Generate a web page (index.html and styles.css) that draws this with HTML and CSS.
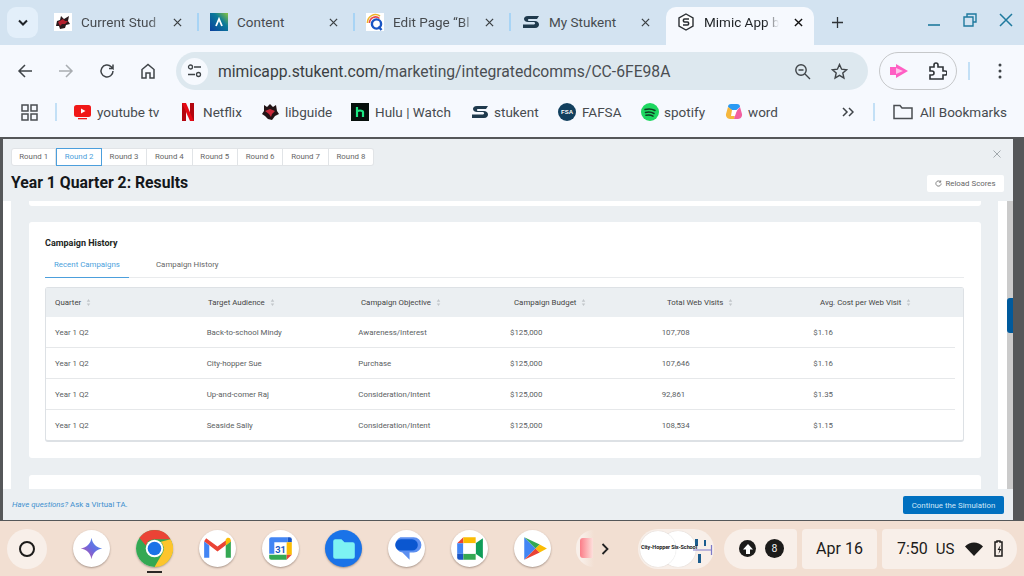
FILE: index.html
```html
<!DOCTYPE html>
<html lang="en">
<head>
<meta charset="utf-8">
<title>Mimic App</title>
<link rel="stylesheet" href="styles.css">
</head>
<body>
<div class="screen">
  <header class="browser">
    <div class="tabstrip">
      <button class="tabsearch"><svg width="12" height="8" viewBox="0 0 12 8"><path d="M2 1.5l4 4 4-4" fill="none" stroke="#1f2328" stroke-width="2"/></svg></button>
      <div class="tab">
        <svg class="fav" viewBox="0 0 18 18"><rect width="18" height="18" fill="#fff"/><path d="M3 8l3-1 1-4 3 3 5-3-1 5 2 3-4 1-1 3-5 1-1-3-3 0z" fill="#2a1a1c"/><path d="M4 9l5-3 2 2 3 0-3 3-3 0-2 2z" fill="#b3202e"/></svg>
        <span class="tabtext fade">Current Stud</span>
        <svg class="tabx" viewBox="0 0 10 10"><path d="M1 1l8 8M9 1l-8 8" stroke="#3c4043" stroke-width="1.4"/></svg>
      </div>
      <i class="tabsep"></i>
      <div class="tab">
        <svg class="fav" viewBox="0 0 18 18"><defs><linearGradient id="ag" x1="0" y1="1" x2="1" y2="0"><stop offset="0" stop-color="#0b3f9e"/><stop offset=".6" stop-color="#0a7a9a"/><stop offset="1" stop-color="#8ac43f"/></linearGradient></defs><rect width="18" height="18" fill="url(#ag)"/><path d="M6 13L9 6l3 7" fill="none" stroke="#fff" stroke-width="1.8"/></svg>
        <span class="tabtext">Content</span>
        <svg class="tabx" viewBox="0 0 10 10"><path d="M1 1l8 8M9 1l-8 8" stroke="#3c4043" stroke-width="1.4"/></svg>
      </div>
      <i class="tabsep"></i>
      <div class="tab">
        <svg class="fav" viewBox="0 0 18 18"><rect width="18" height="18" fill="#fff"/><path d="M1.5 10A8 8 0 0 1 14 3" fill="none" stroke="#f0b429" stroke-width="1.6"/><path d="M3.5 10A6 6 0 0 1 13.5 5.5" fill="none" stroke="#e5484d" stroke-width="1.6"/><circle cx="10.5" cy="11" r="4.6" fill="none" stroke="#1a56c4" stroke-width="2.4"/><path d="M12.5 13.5l3 3.5" stroke="#1a56c4" stroke-width="2.4"/></svg>
        <span class="tabtext fade">Edit Page “Bl</span>
        <svg class="tabx" viewBox="0 0 10 10"><path d="M1 1l8 8M9 1l-8 8" stroke="#3c4043" stroke-width="1.4"/></svg>
      </div>
      <i class="tabsep"></i>
      <div class="tab">
        <svg class="fav" viewBox="0 0 18 18"><path d="M17 3H6C3 3 2 4.500 2 6c0 2 2 3 4 3h6c1.500 0 1.500 2.500 0 2.500H1V15h12c3 0 4-2 4-3.500 0-2-2-3.500-4-3.500H7C5.500 8 5.500 6 7 6h8z" fill="#1f3a4d"/></svg>
        <span class="tabtext">My Stukent</span>
        <svg class="tabx" viewBox="0 0 10 10"><path d="M1 1l8 8M9 1l-8 8" stroke="#3c4043" stroke-width="1.4"/></svg>
      </div>
      <div class="tab tab-active">
        <svg class="fav" viewBox="0 0 18 18"><path d="M9 1l7 4v8l-7 4-7-4V5z" fill="#fff" stroke="#2b2f33" stroke-width="1.4"/><path d="M12 6H7.500C6 6 6 9 7.500 9h3c1.500 0 1.500 3 0 3H6" fill="none" stroke="#2b2f33" stroke-width="1.6"/></svg>
        <span class="tabtext fade">Mimic App b</span>
        <svg class="tabx" viewBox="0 0 10 10"><path d="M1 1l8 8M9 1l-8 8" stroke="#111" stroke-width="1.5"/></svg>
      </div>
      <svg class="newtab" viewBox="0 0 12 12"><path d="M6 0v12M0 6h12" stroke="#2f3337" stroke-width="1.400"/></svg>
      <div class="winctl">
        <svg width="14" height="14" viewBox="0 0 14 14"><path d="M1 12h12" stroke="#1f7a9e" stroke-width="1.600"/></svg>
        <svg width="14" height="14" viewBox="0 0 14 14"><path d="M4 4V1h9v8h-3M1 4h9v9H1z" fill="none" stroke="#1f7a9e" stroke-width="1.400"/></svg>
        <svg width="14" height="14" viewBox="0 0 14 14"><path d="M1 1l12 12M13 1L1 13" stroke="#1f7a9e" stroke-width="1.500"/></svg>
      </div>
    </div>

    <div class="toolbar">
      <div class="navs">
        <svg width="16" height="16" viewBox="0 0 16 16"><path d="M15 8H2M8 2L2 8l6 6" fill="none" stroke="#3f4448" stroke-width="1.500"/></svg>
        <svg width="16" height="16" viewBox="0 0 16 16"><path d="M1 8h13M8 2l6 6-6 6" fill="none" stroke="#a9adb1" stroke-width="1.500"/></svg>
        <svg width="16" height="16" viewBox="0 0 16 16"><path d="M14 8a6 6 0 1 1-1.800-4.300L14 5.500V1.500M14 5.500h-4" fill="none" stroke="#3f4448" stroke-width="1.500"/></svg>
        <svg width="16" height="16" viewBox="0 0 16 16"><path d="M2 15V6.500L8 1.500l6 5V15h-4v-5H6v5z" fill="none" stroke="#3f4448" stroke-width="1.500"/></svg>
      </div>
      <div class="omnibox">
        <span class="tune"><svg width="15" height="14" viewBox="0 0 15 14"><circle cx="3.500" cy="3" r="2" fill="none" stroke="#3f4448" stroke-width="1.300"/><path d="M7 3h7M1 10.500h7" stroke="#3f4448" stroke-width="1.300"/><circle cx="11.500" cy="10.500" r="2" fill="none" stroke="#3f4448" stroke-width="1.300"/></svg></span>
        <span class="url">mimicapp.stukent.com<span class="urlpath">/marketing/integratedcomms/CC-6FE98A</span></span>
        <svg class="omniicon" width="17" height="17" viewBox="0 0 17 17"><circle cx="7" cy="7" r="5.200" fill="none" stroke="#3f4448" stroke-width="1.400"/><path d="M11 11l5 5M4.500 7h5" stroke="#3f4448" stroke-width="1.400"/></svg>
        <svg class="omniicon" width="17" height="17" viewBox="0 0 17 17"><path d="M8.500 1.500l2.100 4.700 5 .5-3.800 3.300 1.100 5-4.400-2.600L4.100 15l1.100-5L1.400 6.700l5-.5z" fill="none" stroke="#3f4448" stroke-width="1.400"/></svg>
      </div>
      <div class="extpill">
        <svg width="20" height="16" viewBox="0 0 20 16"><path d="M1 4h6V1l12 7-12 7v-3H1z" fill="#ff5fc4"/><path d="M7 5l7 3-7 3z" fill="#ffc4ea"/></svg>
        <svg width="19" height="18" viewBox="0 0 19 18"><path d="M2 5h4V3a2 2 0 0 1 4 0v2h5v4h2a1.800 1.800 0 0 1 0 4h-2v4H2v-4h2a2 2 0 0 0 0-4H2z" fill="none" stroke="#2f3337" stroke-width="1.600"/></svg>
      </div>
      <i class="barsep"></i>
      <svg class="dots" width="4" height="16" viewBox="0 0 4 16"><circle cx="2" cy="2" r="1.500" fill="#3f4448"/><circle cx="2" cy="8" r="1.500" fill="#3f4448"/><circle cx="2" cy="14" r="1.500" fill="#3f4448"/></svg>
    </div>

    <nav class="bookmarks">
      <svg class="appsgrid" width="17" height="17" viewBox="0 0 17 17"><path d="M1 1h6v6H1zM10 1h6v6h-6zM1 10h6v6H1zM10 10h6v6h-6z" fill="none" stroke="#4a4e52" stroke-width="1.500"/></svg>
      <i class="barsep bm-sep"></i>
      <a class="bm w-yt"><svg class="bmi" viewBox="0 0 18 18"><rect y="2" width="17" height="12" rx="2.500" fill="#f01818"/><rect x="4" y="15" width="9" height="1.300" fill="#f01818"/><path d="M7 5.500l4.500 2.500L7 10.500z" fill="#fff"/></svg>youtube tv</a>
      <a class="bm w-nf"><svg class="bmi nfi" viewBox="0 0 12 18"><path d="M0 0h4v18l-4 .5z" fill="#b3060f"/><path d="M8 0h4v18.500l-4-.5z" fill="#b3060f"/><path d="M0 0h4l8 18.500-4-.5z" fill="#e50914"/></svg>Netflix</a>
      <a class="bm w-lg"><svg class="bmi" viewBox="0 0 18 18"><path d="M3 2l3 2 3-3 3 3 3-2 1 6 2 3-4 2-3 4-4-1-3-3-3-2 2-3z" fill="#231416"/><path d="M4 8l5-2 5 2-3 3-1 3-2-3z" fill="#c8283a"/></svg>libguide</a>
      <a class="bm w-hu"><svg class="bmi" viewBox="0 0 18 18"><rect width="18" height="18" fill="#06100c"/><path d="M6 4v10M6 9c0-2 6-2 6 0v5" fill="none" stroke="#1ce783" stroke-width="2.200"/></svg>Hulu | Watch</a>
      <a class="bm w-st"><svg class="bmi" viewBox="0 0 18 18"><path d="M17 3H6C3 3 2 4.500 2 6c0 2 2 3 4 3h6c1.500 0 1.500 2.500 0 2.500H1V15h12c3 0 4-2 4-3.500 0-2-2-3.500-4-3.500H7C5.500 8 5.500 6 7 6h8z" fill="#1f3a4d"/></svg>stukent</a>
      <a class="bm w-fa"><span class="fsa">FSA</span>FAFSA</a>
      <a class="bm w-sp"><svg class="bmi" viewBox="0 0 18 18"><circle cx="9" cy="9" r="9" fill="#1ed760"/><path d="M4 6.500c3.500-1 7-.7 10 1M4.500 9.500c3-.8 6-.5 8.500 1M5 12.300c2.500-.6 5-.4 7 .8" fill="none" stroke="#0e3d22" stroke-width="1.500" stroke-linecap="round"/></svg>spotify</a>
      <a class="bm w-wd"><svg class="bmi" viewBox="0 0 18 18"><path d="M6 1h6a3 3 0 0 1 3 3L9 9 3 4a3 3 0 0 1 3-3z" fill="#2b9af3"/><path d="M15 4l2 7c.4 2-1 5-4 5H9l1-6z" fill="#f25fa0"/><path d="M3 4L1 11c-.4 2 1 5 4 5h4l1-7z" fill="#f5b73d"/><path d="M7 7h5l-2 6H6z" fill="#fff"/></svg>word</a>
      <svg class="chev2" width="12" height="10" viewBox="0 0 12 10"><path d="M1 1l4 4-4 4M7 1l4 4-4 4" fill="none" stroke="#3f4448" stroke-width="1.500"/></svg>
      <i class="barsep bm-sep2"></i>
      <a class="bm allbm"><svg class="folder" width="20" height="16" viewBox="0 0 20 16"><path d="M1 14.500V1.500h6l2 2.500h10v10.500z" fill="none" stroke="#4a4e52" stroke-width="1.500"/></svg>All Bookmarks</a>
    </nav>
  </header>

  <main class="stage">
    <section class="modal">
      <div class="modalhead">
        <div class="headleft">
          <div class="rounds">
            <span class="round">Round 1</span>
            <span class="round round-on">Round 2</span>
            <span class="round">Round 3</span>
            <span class="round">Round 4</span>
            <span class="round">Round 5</span>
            <span class="round">Round 6</span>
            <span class="round">Round 7</span>
            <span class="round">Round 8</span>
          </div>
          <h1 class="title">Year 1 Quarter 2: Results</h1>
        </div>
        <div class="headright">
          <svg class="modalx" width="8" height="8" viewBox="0 0 8 8"><path d="M.5.500l7 7M7.500.500l-7 7" stroke="#9aa0a5" stroke-width=".9"/></svg>
          <button class="reload"><svg width="7" height="7" viewBox="0 0 8 8"><path d="M7 4a3 3 0 1 1-1-2.200M6.500.5v2h-2" fill="none" stroke="#555" stroke-width=".8"/></svg>Reload Scores</button>
        </div>
      </div>

      <div class="modalbody">
        <div class="panel">
          <div class="stub stub-top"></div>
          <article class="card">
            <h2 class="cardtitle">Campaign History</h2>
            <div class="cardtabs">
              <span class="cardtab cardtab-on">Recent Campaigns</span>
              <span class="cardtab">Campaign History</span>
            </div>
            <div class="table">
              <div class="thead">
                <span>Quarter <svg class="sort" viewBox="0 0 5 8"><path d="M2.500 0l2 3h-4zM2.500 8l2-3h-4z"/></svg></span>
                <span>Target Audience <svg class="sort" viewBox="0 0 5 8"><path d="M2.500 0l2 3h-4zM2.500 8l2-3h-4z"/></svg></span>
                <span>Campaign Objective <svg class="sort" viewBox="0 0 5 8"><path d="M2.500 0l2 3h-4zM2.500 8l2-3h-4z"/></svg></span>
                <span>Campaign Budget <svg class="sort" viewBox="0 0 5 8"><path d="M2.500 0l2 3h-4zM2.500 8l2-3h-4z"/></svg></span>
                <span>Total Web Visits <svg class="sort" viewBox="0 0 5 8"><path d="M2.500 0l2 3h-4zM2.500 8l2-3h-4z"/></svg></span>
                <span>Avg. Cost per Web Visit <svg class="sort" viewBox="0 0 5 8"><path d="M2.500 0l2 3h-4zM2.500 8l2-3h-4z"/></svg></span>
              </div>
              <div class="trow"><span>Year 1 Q2</span><span>Back-to-school Mindy</span><span>Awareness/Interest</span><span>$125,000</span><span>107,708</span><span>$1.16</span></div>
              <div class="trow"><span>Year 1 Q2</span><span>City-hopper Sue</span><span>Purchase</span><span>$125,000</span><span>107,646</span><span>$1.16</span></div>
              <div class="trow"><span>Year 1 Q2</span><span>Up-and-comer Raj</span><span>Consideration/Intent</span><span>$125,000</span><span>92,861</span><span>$1.35</span></div>
              <div class="trow trow-last"><span>Year 1 Q2</span><span>Seaside Sally</span><span>Consideration/Intent</span><span>$125,000</span><span>108,534</span><span>$1.15</span></div>
            </div>
          </article>
          <div class="stub stub-bottom"></div>
        </div>
        <div class="scrolltrack"><div class="scrollthumb"></div></div>
      </div>

      <div class="modalfoot">
        <a class="help"><em>Have questions?</em> Ask a Virtual TA.</a>
        <button class="continue">Continue the Simulation</button>
      </div>
    </section>
  </main>

  <footer class="shelf">
    <span class="launcher"><i></i></span>
    <div class="apps">
      <span class="app"><svg viewBox="0 0 36 36"><defs><linearGradient id="gem" x1="0" y1="1" x2="1" y2="0"><stop offset="0" stop-color="#d0509a"/><stop offset=".5" stop-color="#6a6ae0"/><stop offset="1" stop-color="#4a9cf0"/></linearGradient></defs><path d="M18 7.500c1 6 4.500 9.500 10.500 10.500-6 1-9.500 4.500-10.500 10.500-1-6-4.500-9.500-10.500-10.500 6-1 9.500-4.500 10.500-10.500z" fill="url(#gem)"/></svg></span>
      <span class="app app-running"><svg viewBox="0 0 38 38"><circle cx="19" cy="19" r="19" fill="#34a853"/><path d="M19 0a19 19 0 0 1 16.500 9.500H19a9.500 9.500 0 0 0-9 6.500L3.500 8A19 19 0 0 1 19 0z" fill="#ea4335"/><path d="M35.500 9.500A19 19 0 0 1 19 38l8.200-14.200A9.500 9.500 0 0 0 25.500 12z" fill="#fdc52d"/><circle cx="19" cy="19" r="9" fill="#fff"/><circle cx="19" cy="19" r="7" fill="#1a73e8"/></svg></span>
      <span class="app"><svg viewBox="0 0 36 36"><path d="M5 11v16h5V15z" fill="#4285f4"/><path d="M26 15v12h5V11z" fill="#34a853"/><path d="M5 11l13 10 13-10-2-3-11 8L7 8z" fill="#ea4335"/><path d="M26 15l5-4c0-3-2-4-4-3l-1 1z" fill="#fbbc04"/></svg></span>
      <span class="app"><svg viewBox="0 0 36 36"><rect x="7" y="7" width="22" height="22" rx="2" fill="#fff"/><path d="M7 9a2 2 0 0 1 2-2h16v5H12v11H7z" fill="#4285f4"/><path d="M25 7h2a2 2 0 0 1 2 2v3h-4z" fill="#1a56c4"/><path d="M24 12h5v12h-5z" fill="#fbbc04"/><path d="M12 24h12v5H9a2 2 0 0 1-2-2v-3z" fill="#34a853"/><path d="M24 24h5l-5 5z" fill="#ea4335"/><text x="18" y="22" class="calnum">31</text></svg></span>
      <span class="app app-blue"><svg viewBox="0 0 36 36"><path d="M8 11a2 2 0 0 1 2-2h6l3 3h8a2 2 0 0 1 2 2v12a2 2 0 0 1-2 2H10a2 2 0 0 1-2-2z" fill="#7df3f3"/></svg></span>
      <span class="app"><svg viewBox="0 0 36 36"><path d="M12 7h13a7 7 0 0 1 0 15h-4v7l-7-7a8 8 0 0 1-2-15z" fill="#5c8ff0"/><rect x="7" y="9" width="22" height="11" rx="5.500" fill="#0b57d0"/></svg></span>
      <span class="app"><svg viewBox="0 0 36 36"><path d="M6 13l6-6v6z" fill="#ea4335"/><path d="M12 7h12v6H12z" fill="#fbbc04"/><path d="M6 13h6v10H6z" fill="#4285f4"/><path d="M6 23h6v6H8a2 2 0 0 1-2-2z" fill="#1a56c4"/><path d="M12 23h12v6H12z" fill="#34a853"/><path d="M24 13l7-5v20l-7-5z" fill="#0f9d58"/><rect x="12" y="13" width="12" height="10" fill="#fff"/></svg></span>
      <span class="app"><svg viewBox="0 0 36 36"><path d="M10 7v22l11-11z" fill="#4285f4"/><path d="M10 7l11 11 4-4z" fill="#34a853"/><path d="M10 29l11-11 4 4z" fill="#ea4335"/><path d="M25 14l7 4-7 4-4-4z" fill="#fbbc04"/></svg></span>
      <span class="app-clip"><i></i></span>
      <svg class="shelfchev" width="8" height="12" viewBox="0 0 8 12"><path d="M1.500 1l5 5-5 5" fill="none" stroke="#222" stroke-width="1.800"/></svg>
    </div>
    <div class="holding">
      <i class="thumbcircle tc1"></i><i class="thumbcircle tc2"></i>
      <svg class="thumbart" width="22" height="34" viewBox="0 0 22 34"><path d="M3 7h3v7H3zM12 8h2v6h-2zM6 22h3v9H6z" fill="#1b5d8e"/><path d="M1 18h18" stroke="#7e7ac8" stroke-width="1"/><path d="M19.500 13v10" stroke="#7e7ac8" stroke-width="1.200"/></svg>
      <span class="thumbtext">City-Hopper Six-School</span>
    </div>
    <div class="tray tray-status">
      <span class="tb"><svg width="12" height="12" viewBox="0 0 12 12"><path d="M6 1l5 5.500H8V11H4V6.500H1z" fill="#fff"/></svg></span>
      <span class="tb tb-num">8</span>
    </div>
    <div class="tray tray-date">Apr 16</div>
    <div class="tray tray-clock">
      <span>7:50</span><span class="us">US</span>
      <svg width="18" height="14" viewBox="0 0 18 14"><path d="M0 4.500C5-1 13-1 18 4.500L9 14z" fill="#1c1b1a"/></svg>
      <svg width="10" height="17" viewBox="0 0 10 17"><path d="M3 1h3v1h2v14H1V2h2z" fill="none" stroke="#1c1b1a" stroke-width="1.500"/><path d="M6.500 5L3.500 10h2l-1 4 3-5h-2z" fill="#1c1b1a"/></svg>
    </div>
  </footer>
</div>
</body>
</html>
```
FILE: styles.css
```css
* { box-sizing: border-box; }
html, body { margin: 0; padding: 0; }
body { font-family: Roboto, "Liberation Sans", sans-serif; overflow: hidden; }
button { font-family: inherit; padding: 0; border: 0; }
svg { display: block; flex: none; }
i { display: block; }
a { display: flex; align-items: center; }

.screen { width: 1024px; height: 576px; display: flex; flex-direction: column; overflow: hidden; }
.browser { height: 137px; background: #f6f9fe; flex: none; }

/* tab strip */
.tabstrip { height: 45px; background: #d3e3f1; display: flex; align-items: flex-start; padding-left: 7px; }
.tabsearch { width: 31px; height: 31px; margin-top: 7px; margin-right: 5px; border-radius: 9px; background: #e3effa; display: flex; align-items: center; justify-content: center; flex: none; }
.tab { width: 154px; height: 38px; margin-top: 7px; padding: 0 0 8px 11px; display: flex; align-items: center; color: #474b4f; font-size: 13.5px; flex: none; }
.fav { width: 18px; height: 18px; }
.tabtext { width: 84px; margin-left: 9px; white-space: nowrap; overflow: hidden; }
.fade { -webkit-mask-image: linear-gradient(90deg, #000 82%, transparent); mask-image: linear-gradient(90deg, #000 82%, transparent); }
.tabx { width: 9px; height: 9px; margin-left: 8px; }
.tabsep { width: 2px; height: 18px; background: #a8d4f5; margin-top: 13px; flex: none; }
.tab-active { width: 148px; margin-left: 1px; margin-top: 7px; background: #f6f9fe; border-radius: 10px 10px 0 0; color: #1f2326; }
.tab-active .tabtext { width: 75px; margin-left: 9px; }
.tab-active .tabx { margin-left: 15px; }
.newtab { width: 11px; height: 11px; margin: 17px 0 0 18px; }
.winctl { margin-left: auto; display: flex; gap: 22px; padding: 13px 11px 0 0; }

/* toolbar */
.toolbar { height: 45px; display: flex; align-items: flex-start; padding: 7px 0 0 17px; }
.navs { width: 159px; display: flex; gap: 25px; height: 38px; align-items: center; flex: none; }
.omnibox { width: 692px; height: 38px; border-radius: 19px; background: #dde8ef; display: flex; align-items: center; padding-left: 5px; flex: none; }
.tune { width: 27px; height: 27px; border-radius: 50%; background: #f6f9fe; display: flex; align-items: center; justify-content: center; flex: none; }
.url { margin-left: 10px; font-size: 15.7px; color: #3a3e42; width: 581px; white-space: nowrap; }
.urlpath { color: #4a4e52; }
.omniicon { margin-right: 20px; }
.extpill { width: 78px; height: 38px; margin-left: 11px; border: 1px solid #c6c8ca; border-radius: 19px; display: flex; align-items: center; justify-content: space-between; padding: 0 9px 0 9px; flex: none; }
.barsep { width: 2px; height: 18px; background: #c3e0f6; flex: none; }
.toolbar .barsep { margin: 10px 0 0 11px; }
.dots { margin: 11px 0 0 28px; }

/* bookmarks */
.bookmarks { height: 47px; display: flex; align-items: center; padding: 0 0 3px 21px; font-size: 13.5px; color: #474b4f; }
.appsgrid { margin-right: 17px; }
.bm-sep { margin-right: 17px; }
.bm { flex: none; white-space: nowrap; }
.bmi { width: 18px; height: 18px; margin-right: 5px; flex: none; }
.nfi { width: 12px; margin-right: 9px; }
.w-lg .bmi, .w-hu .bmi { margin-right: 6px; }
.w-yt { width: 108px; }
.w-nf { width: 79px; }
.w-lg { width: 90px; }
.w-hu { width: 120px; }
.w-st { width: 87px; }
.w-fa { width: 83px; }
.w-sp { width: 84px; }
.w-wd { width: 117px; }
.fsa { width: 18px; height: 18px; margin-right: 6px; border-radius: 50%; background: #12405e; color: #fff; font: 700 6px/18px "Liberation Sans", sans-serif; text-align: center; flex: none; }
.bm-sep2 { margin: 0 18px 0 19px; }
.folder { margin-right: 7px; }

/* stage */
.stage { height: 384px; flex: none; background: #555759; border-top: 2px solid #555759; padding-left: 3px; }
.modal { width: 1010px; height: 381px; display: flex; flex-direction: column; background: #fff; }
.modalhead { height: 62px; background: #ebeff2; flex: none; display: flex; justify-content: space-between; padding: 9px 9px 0 8px; }
.rounds { display: flex; }
.round { width: 45.4px; height: 18px; line-height: 16px; background: #fff; border: 1px solid #e1e4e7; border-left-width: 0; font-size: 7.875px; color: #666; text-align: center; }
.round:first-child { border-left-width: 1px; border-radius: 3px 0 0 3px; }
.round:last-child { border-radius: 0 3px 3px 0; }
.round-on { border: 1px solid #4c9fdc; color: #4c9fdc; }
.title { margin: 8px 0 0; font-size: 15.75px; font-weight: 700; line-height: 17px; color: #14171a; }
.headright { display: flex; flex-direction: column; align-items: flex-end; }
.modalx { margin: 2px 3px 0 0; }
.reload { margin-top: 17px; width: 77px; height: 17px; background: #fff; border-radius: 2px; font-size: 7.875px; color: #666; display: flex; align-items: center; justify-content: center; gap: 3px; }

.modalbody { height: 288px; flex: none; display: flex; overflow: hidden; padding-left: 8px; }
.panel { width: 987px; height: 288px; background: #ebeff2; padding: 0 17px 0 18px; overflow: hidden; flex: none; }
.stub { background: #fff; }
.stub-top { height: 5px; border-radius: 0 0 3px 3px; }
.stub-bottom { height: 14px; border-radius: 3px 3px 0 0; margin-top: 17px; }
.card { height: 236px; margin-top: 16px; background: #fff; border-radius: 3px; padding: 14px 16px 0; }
.cardtitle { margin: 0; font-size: 9px; line-height: 14px; font-weight: 700; color: #1c1f22; }
.cardtabs { height: 28px; display: flex; border-bottom: 1px solid #e9ebed; font-size: 7.875px; color: #666; width: 919px; }
.cardtab { height: 28px; line-height: 29px; padding: 0 9px; margin-right: 18px; }
.cardtab-on { width: 84px; color: #4c9fdc; border-bottom: 1px solid #4c9fdc; }
.table { width: 919px; margin-top: 9px; border: 1px solid #dde1e5; border-bottom-width: 2px; border-radius: 3px; }
.thead { height: 29px; background: #ebeff2; display: grid; grid-template-columns: repeat(6, 153px); padding-left: 9px; align-items: center; font-size: 7.875px; color: #444; }
.thead span { display: flex; align-items: center; gap: 5px; }
.sort { width: 5px; height: 7px; fill: #c2c6ca; }
.trow { height: 31px; margin-right: 8px; display: grid; grid-template-columns: repeat(6, 151.67px); padding-left: 9px; align-items: center; font-size: 7.875px; color: #5a5e62; border-bottom: 1px solid #e6e8ea; }
.trow-last { height: 30px; border-bottom: 0; }

.scrolltrack { width: 6px; margin-left: 9px; background: #cbcbcb; flex: none; }
.scrollthumb { width: 6px; height: 35px; margin-top: 97px; background: #005a9c; border-radius: 3px 0 0 3px; }

.modalfoot { height: 31px; background: #ebeff2; flex: none; display: flex; justify-content: space-between; align-items: center; padding: 0 9px 0 9px; }
.help { font-size: 7.875px; color: #3f8fcf; }
.help em { margin-right: 2px; }
.continue { width: 101px; height: 18px; background: #0070c0; color: #cfe6f7; border-radius: 2px; font-size: 7.875px; margin-top: 1px; }

/* shelf */
.shelf { height: 55px; flex: none; background: #f2dfd2; display: flex; align-items: center; padding: 0 7px 0 7px; }
.launcher { width: 40px; height: 40px; border-radius: 50%; background: #f8efe9; display: flex; align-items: center; justify-content: center; flex: none; }
.launcher i { width: 16px; height: 16px; border-radius: 50%; border: 2px solid #1c1b1a; }
.apps { width: 551px; margin-left: 26px; display: flex; align-items: center; gap: 26px; flex: none; }
.app { width: 37px; height: 37px; border-radius: 50%; background: #fff; box-shadow: 0 1px 2px rgba(80,60,50,.45); flex: none; overflow: hidden; position: relative; }
.app svg { width: 37px; height: 37px; }
.app-running { overflow: visible; }
.app-running::after { content: ""; position: absolute; left: 11px; top: 41px; width: 15px; height: 1.5px; background: #2a2725; }
.app-blue { background: #1a73e8; }
.calnum { font: 700 9px Roboto, sans-serif; fill: #1a56c4; text-anchor: middle; }
.app-clip { width: 18px; height: 37px; border-radius: 18px 0 0 18px; background: linear-gradient(90deg, #f8efe9, #f8efe9 30%, rgba(248,239,233,0)); flex: none; margin: 0 -19px 0 -1px; }
.app-clip i { width: 13px; height: 20px; margin: 8px 0 0 4px; border-radius: 3px 0 0 3px; background: linear-gradient(90deg, #fb7d88, #fde0dc); }

.holding { width: 76px; height: 40px; margin-left: 14px; position: relative; background: #f8efe9; border-radius: 20px; flex: none; overflow: hidden; }
.thumbcircle { position: absolute; top: 2px; width: 36px; height: 36px; border-radius: 50%; background: #fff; }
.tc1 { left: 2px; z-index: 1; box-shadow: 0 0 1px rgba(0,0,0,.2); }
.tc2 { left: 22px; box-shadow: 0 0 1px rgba(0,0,0,.2); }
.thumbart { position: absolute; right: 0; top: 3px; }
.thumbtext { position: absolute; left: 3px; top: 15px; z-index: 2; width: 60px; font-size: 5.5px; font-weight: 700; white-space: nowrap; color: #222; letter-spacing: -.1px; }

.tray { height: 40px; background: #f8efe9; display: flex; align-items: center; flex: none; color: #1c1b1a; font-size: 16px; }
.tray-status { width: 73px; margin-left: 10px; border-radius: 20px 4px 4px 20px; padding-left: 15px; gap: 9px; }
.tb { width: 17px; height: 17px; border-radius: 50%; background: #1c1b1a; display: flex; align-items: center; justify-content: center; flex: none; }
.tb-num { width: 19px; height: 19px; color: #eee; font-size: 10.5px; }
.tray-date { width: 75px; margin-left: 5px; border-radius: 4px; justify-content: center; }
.tray-clock { width: 135px; margin-left: 5px; border-radius: 4px 20px 20px 4px; padding-left: 15px; }
.us { margin: 0 10px 0 8px; font-size: 15px; }
.tray-clock svg + svg { margin-left: 11px; }
```
